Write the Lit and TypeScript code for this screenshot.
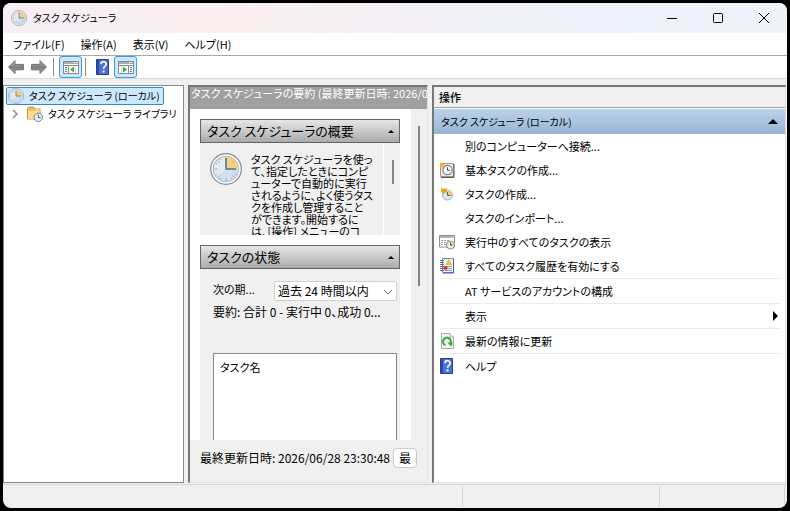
import { LitElement, html, css, svg, nothing } from "lit";
import { customElement } from "lit/decorators.js";

const clockFace = svg`
  <circle cx="16" cy="16" r="15.3" fill="#fdfdfd" stroke="#85898d" stroke-width="1.2"/>
  <circle cx="16" cy="16" r="12.8" fill="#e2ecf5" stroke="#a9adb1" stroke-width="1"/>
  <path d="M7 25 L25 7 A12.6 12.6 0 0 1 7 25Z" fill="#c3d8ea" opacity=".6"/>
  <path d="M16 16V3.6A12.4 12.4 0 0 1 28.4 16Z" fill="#f5d080"/>
  <path d="M16 5V16H26" fill="none" stroke="#53718f" stroke-width="1.6"/>
  <path d="M16 25v3M4.5 16h3M8 8l1.6 1.6M8 24l1.6-1.6M24 24l-1.6-1.6M24 8l-1.6 1.6M10 5.6l.8 1.4M5.6 10l1.4.8M5.6 22l1.4-.8M10 26.4l.8-1.4M22 26.4l-.8-1.4M26.4 22l-1.4-.8" stroke="#8fa6bb" stroke-width=".9"/>`;

const clock = (cls: string) => html`<svg class=${cls} viewBox="0 0 32 32" aria-hidden="true">${clockFace}</svg>`;

const arrow = (flip: boolean) => html`<svg class="i16" viewBox="0 0 16 16" aria-hidden="true">
  <defs><linearGradient id="g" x1="0" y1="0" x2="0" y2="1"><stop offset="0" stop-color="#bdbdbd"/><stop offset=".5" stop-color="#7d7d7d"/><stop offset="1" stop-color="#b0b0b0"/></linearGradient></defs>
  <path transform=${flip ? "matrix(-1 0 0 1 16 0)" : ""} d="M.6 8 7 1.6V5.4H15.4V10.8H7V14.6Z" fill="url(#g)" stroke="#6c6c6c" stroke-width="1" stroke-linejoin="round"/></svg>`;

const paneIcon = (right: boolean) => html`<svg class="i16" viewBox="0 0 16 16" aria-hidden="true">
  <path d="M.5 2.5h15v12H.5z" fill="#fff" stroke="#868b92"/>
  <path d="M1 3h14v2H1z" fill="#a9adb3"/><path d="M11 3.5h1M13 3.5h1" stroke="#fff"/>
  <path d="M1 6.5h14" stroke="#868b92"/>
  ${right
    ? svg`<path d="M10.5 7v7" stroke="#868b92"/><path d="M12 8.5h2M12 10.5h2M12 12.5h2" stroke="#4d78b8"/><path d="M3.5 7v7" stroke="#d5d9df"/><path d="M5 7.500v6l4-3z" fill="#3fae2f"/>`
    : svg`<path d="M5.5 7v7" stroke="#868b92"/><path d="M2 8.5h2M2 10.5h2M2 12.5h2" stroke="#4d78b8"/><path d="M12.5 7v7" stroke="#d5d9df"/><path d="M11 7.500v6l-4-3z" fill="#3fae2f"/>`}
</svg>`;

const helpIcon = html`<svg class="i16" viewBox="0 0 16 16" aria-hidden="true">
  <path d="M1.5.5h12v15h-12z" fill="#4a72d6" stroke="#263f8f"/><path d="M2 1h2v14H2z" fill="#2c4bab"/>
  <path d="M5.900 5.2C5.900 1.800 11.200 2 11.100 5.200 11 7.200 8.500 7.400 8.500 9.800" fill="none" stroke="#fff" stroke-width="1.700"/>
  <path d="M7.600 11.400h1.900v2H7.600z" fill="#fff"/></svg>`;

const folderIcon = html`<svg class="i16" viewBox="0 0 16 16" aria-hidden="true">
  <path d="M.5 2.5 1.5 1h5l1 1.5h5.500V13H.5z" fill="#e9bd55" stroke="#c9983a"/>
  <path d="M1 4.500h12V13H1z" fill="#f8dc8c"/><path d="M8.500 3h4" stroke="#fff"/>
  <circle cx="11.300" cy="11.300" r="4.200" fill="#e8f1f8" stroke="#71828f"/>
  <path d="M11.300 8.500V11.500H13.600" fill="none" stroke="#3c5872"/></svg>`;

const basicTaskIcon = html`<svg class="i16" viewBox="0 0 16 16" aria-hidden="true">
  <path d="M1.500 1.500h13v13h-13z" fill="#eee9e4" stroke="#a0958e"/><path d="M15 2v13.500H2" fill="none" stroke="#5f5550"/>
  <circle cx="8.500" cy="8" r="4.600" fill="#f5f9fc" stroke="#7b858d" stroke-width="1.200"/>
  <path d="M8.500 5.300V8.300H11" fill="none" stroke="#3d5268"/>
  <path d="M2.800 0 3.800 1.800 6 1.200 5.200 3 6.400 4 4.600 4.600 4.200 6.400 2.800 5.200 1.200 6.200 1.300 4.300 0 3.400 1.500 2.700 1 1 2.300 1.600Z" fill="#f9b137"/></svg>`;

const taskIcon = html`<svg class="i16" viewBox="0 0 16 16" aria-hidden="true">
  <circle cx="8.500" cy="9" r="5" fill="#dbe9f2" stroke="#9fabb3"/>
  <path d="M8.500 9V4A5 5 0 0 1 13.500 9Z" fill="#f3cd7c"/>
  <path d="M8.500 6V9.500H11.500" fill="none" stroke="#4b6379"/>
  <path d="M2 2 5 3 7.500 2 7.500 4.500 8.500 6 6 6.500 4.500 8.500 3.500 6.500 2 6Z" fill="#f59a1c"/></svg>`;

const runningIcon = html`<svg class="i16" viewBox="0 0 16 16" aria-hidden="true">
  <path d="M.5 1.500h15v11.500H.5z" fill="#fff" stroke="#8b9097"/><path d="M1 2h14v2H1z" fill="#aeb4bb"/>
  <path d="M12 3h1M14 3h1" stroke="#fff"/>
  <path d="M2 6.500h2M5 6.500h2M8 6.500h2M2 8.500h2M5 8.500h2M2 10.500h2M5 10.500h2" stroke="#98a0a8"/>
  <circle cx="11.500" cy="11" r="4" fill="#eaf2ec" stroke="#7e8b8c"/><path d="M11.500 11V7.300A3.700 3.700 0 0 1 15.200 11Z" fill="#eed08a"/>
  <path d="M11.500 8.500V11.300H13.500" fill="none" stroke="#3f5a70"/></svg>`;

const historyIcon = html`<svg class="i16" viewBox="0 0 16 16" aria-hidden="true">
  <path d="M3.500 .5h11v14h-11z" fill="#f2f6fc" stroke="#6d8cc4"/><path d="M14.500 1v14H4" fill="none" stroke="#3e5f9f"/>
  <path d="M1 2.500h4M1 4.500h4M1 6.500h4M1 8.500h4M1 10.500h4M1 12.500h4" stroke="#6d6d70"/>
  <path d="M6 8.500h7M6 10.500h7M6 12.500h7" stroke="#7fa2d2"/>
  <path d="M9.800 1.500 12.800 6.500H7Z" fill="#f7c928" stroke="#d8a414" stroke-width=".6"/><circle cx="6.500" cy="10" r="2" fill="#d2322d"/></svg>`;

const refreshIcon = html`<svg class="i16" viewBox="0 0 16 16" aria-hidden="true">
  <path d="M2.500.5h8.500l3.500 3.500v11.500h-12z" fill="#f6f7f8" stroke="#a5a9ad"/><path d="M11 .5v3.500h3.500" fill="#fff" stroke="#a5a9ad"/>
  <path d="M6.500 12.200A3.900 3.900 0 1 1 11.600 10" fill="none" stroke="#38ae38" stroke-width="2.100"/>
  <path d="M8.300 9.500h5.400l-1.200 4.200Z" fill="#38ae38"/></svg>`;

interface Action { label: string; icon?: unknown; line?: boolean; sub?: boolean }

const actions: Action[] = [
  { label: "別のコンピューターへ接続..." },
  { label: "基本タスクの作成...", icon: basicTaskIcon },
  { label: "タスクの作成...", icon: taskIcon },
  { label: "タスクのインポート..." },
  { label: "実行中のすべてのタスクの表示", icon: runningIcon },
  { label: "すべてのタスク履歴を有効にする", icon: historyIcon },
  { label: "AT サービスのアカウントの構成", line: true },
  { label: "表示", line: true, sub: true },
  { label: "最新の情報に更新", icon: refreshIcon, line: true },
  { label: "ヘルプ", icon: helpIcon, line: true },
];

const overview = [
  "タスク スケジューラを使っ", "て、指定したときにコンピ", "ューターで自動的に実行", "されるように、よく使うタス",
  "クを作成し管理すること", "ができます。開始するに", "は、[操作] メニューのコ",
];

@customElement("app-root")
export class AppRoot extends LitElement {
  static styles = css`
    :host { display: block; height: 100vh; box-sizing: border-box; padding: 3px; background: #000; color: #000;
      font: 12px/16px "Noto Sans CJK JP", "Noto Sans", sans-serif; font-feature-settings: "palt"; }
    * { box-sizing: border-box; }
    button, select { font: inherit; font-feature-settings: inherit; color: inherit; margin: 0; padding: 0; border: 0; background: none; }
    svg { display: block; flex: none; }
    .i16 { width: 16px; height: 16px; }
    .i32 { width: 32px; height: 32px; }
    .window { height: 100%; display: flex; flex-direction: column; border-radius: 8px; overflow: hidden; background: #f0f0f0; white-space: nowrap; }
    .title { display: flex; align-items: center; height: 30px; flex: none; padding-left: 8px; background: linear-gradient(90deg, #f6eff5, #faeff0 30%, #f1f1f8 60%, #eef2fb 80%, #f0f3fa); font-size: 10px; }
    .title h1 { flex: 1; margin: 0; padding-left: 6px; font: inherit; }
    .caption { width: 46px; height: 30px; display: grid; place-items: center; }
    .menu { display: flex; gap: 16px; flex: none; height: 23px; align-items: center; padding-left: 10px; background: #fff; border-bottom: 1px solid #a8a8a8; font-size: 11px; }
    .tools { display: flex; align-items: center; flex: none; height: 23px; padding-left: 1px; background: #fff; border-bottom: 1px solid #d8d8d8; }
    .tool { width: 23px; height: 22px; display: grid; place-items: center; }
    .tool.on { background: #cce8ff; border: 1px solid #3c9bdc; border-radius: 3px; }
    .bar { width: 1px; height: 18px; margin: 0 5px 0 3px; background: #8a8a8a; }
    .panes { flex: 1; min-height: 0; display: flex; gap: 4px; padding: 6px 1px 1px 0; }
    .tree { flex: 0 0 181px; min-width: 0; border: 1px solid #828790; background: #fff; padding: 1px 2px; font-size: 10px; }
    .node { display: flex; align-items: center; gap: 5px; height: 18px; }
    .node.sel { width: max-content; padding: 0 3px 0 1px; background: #cce8ff; border: 1px solid #2a8dd4; border-radius: 2px; }
    .node.child { padding-left: 6px; }
    .node.child .i16 { margin-left: 3px; }
    .center { flex: 0 0 240px; min-width: 0; display: flex; flex-direction: column; border: solid; border-width: 2px 1px 1px 2px; border-color: #777 #e3e3e3 #e3e3e3 #777; font-size: 11px; }
    .head { flex: none; height: 22px; padding-left: 1px; line-height: 12px; background: #a0a0a0; color: #fff; overflow: hidden; }
    .scroll { flex: 1; min-height: 0; display: flex; }
    .content { flex: 1; min-width: 0; display: flex; flex-direction: column; gap: 10px; padding: 10px 11px 0 10px; background: #fff; overflow: hidden; }
    .track { flex: none; width: 16px; padding: 17px 0 0 7px; }
    .thumb { width: 2px; height: 160px; background: #868686; }
    .card { flex: none; background: #f0f0f0; }
    .card.grow { flex: 1; min-height: 0; display: flex; flex-direction: column; }
    .card h2 { margin: 0; font: inherit; }
    .fold { width: 100%; height: 24px; display: flex; align-items: center; justify-content: space-between; padding: 0 5px 0 6px; border: 1px solid #646464; background: linear-gradient(#e6e6e6, #c9c9c9 50%, #ababab); font-size: 13px; }
    .intro { display: flex; height: 92px; overflow: hidden; padding: 10px 0 0 10px; }
    .intro p { flex: 1; min-width: 0; margin: 0 0 0 9px; line-height: 12px; }
    .intro p span { display: block; }
    .intro .rail { flex: none; width: 17px; margin-top: -10px; padding: 17px 0 0 8px; border-left: 1px solid #fff; }
    .intro .rail i { display: block; width: 2px; height: 24px; background: #868686; }
    .status { flex: 1; min-height: 0; display: flex; flex-direction: column; padding: 12px 3px 0 13px; overflow: hidden; font-size: 12px; }
    .period { display: flex; justify-content: space-between; align-items: flex-start; }
    .period label, .list { font-size: 11px; }
    .pick { position: relative; display: block; width: 123px; }
    .pick select { width: 100%; height: 20px; padding: 0 3px; appearance: none; background: #fff; border: 1px solid #cfcfcf; border-radius: 2px; }
    .pick svg { position: absolute; right: 4px; top: 8px; pointer-events: none; }
    .sum { margin: 3px 0 33px; }
    .list { flex: 1; width: 100%; border: 1px solid #828790; border-bottom: 0; background: #fff; border-spacing: 0; }
    .list th { padding: 5px 6px; text-align: left; vertical-align: top; font-weight: 400; }
    .foot { flex: none; height: 42px; display: flex; align-items: center; justify-content: space-between; padding: 0 10px 7px; font-size: 12px; }
    .foot button { width: 24px; height: 20px; background: #fff; border: 1px solid #ccc; border-radius: 4px; line-height: 16px; }
    .actions { flex: 1; min-width: 0; border: solid; border-width: 2px 1px 1px 2px; border-color: #777 #e3e3e3 #e3e3e3 #777; background: #fff; font-size: 11px; }
    .actions h2 { height: 21px; margin: 0; padding: 2px 5px; background: #f0f0f0; border-bottom: 1px solid #a0a0a0; font: inherit; font-weight: 500; }
    .group { display: flex; align-items: center; justify-content: space-between; width: 100%; height: 26px; padding: 0 7px; border-top: 1px solid #fff; background: linear-gradient(#bcd3ea, #98b4d4); font-size: 10px; }
    .actions ul { list-style: none; margin: 0; padding: 0 5px; }
    .line { border-top: 1px solid #ececec; }
    .act { display: grid; grid-template-columns: 16px 1fr auto; gap: 10px; align-items: center; width: 100%; height: 24px; text-align: left; }
    .act .arrow { margin-right: 2px; }
    .bottom { flex: none; height: 24px; display: grid; grid-template-columns: 458px 197px 1fr; border-top: 1px solid #d4d4d4; padding: 1px 2px; }
    .bottom div { border-right: 1px solid #d4d4d4; }
  `;

  render() {
    return html`
      <div class="window">
        <header class="title">
          ${clock("i16")}
          <h1>タスク スケジューラ</h1>
          <button class="caption" aria-label="最小化"><svg width="12" height="12"><path d="M1 6.5h10" stroke="#000"/></svg></button>
          <button class="caption" aria-label="最大化"><svg width="12" height="12"><rect x="1.500" y="1.500" width="9" height="9" rx="1" fill="none" stroke="#000"/></svg></button>
          <button class="caption" aria-label="閉じる"><svg width="12" height="12"><path d="M1 1l10 10M11 1L1 11" stroke="#000"/></svg></button>
        </header>
        <nav class="menu">
          <button>ファイル(F)</button><button>操作(A)</button><button>表示(V)</button><button>ヘルプ(H)</button>
        </nav>
        <div class="tools" role="toolbar">
          <button class="tool" aria-label="戻る">${arrow(false)}</button>
          <button class="tool" aria-label="進む">${arrow(true)}</button>
          <span class="bar"></span>
          <button class="tool on" aria-label="ツリー">${paneIcon(false)}</button>
          <span class="bar"></span>
          <button class="tool" aria-label="ヘルプ">${helpIcon}</button>
          <button class="tool on" aria-label="操作ウィンドウ">${paneIcon(true)}</button>
        </div>
        <main class="panes">
          <nav class="tree">
            <button class="node sel">${clock("i16")}タスク スケジューラ (ローカル)</button>
            <button class="node child">
              <svg width="7" height="10"><path d="M1 1l4 4-4 4" fill="none" stroke="#8c8c8c" stroke-width="1.500"/></svg>
              ${folderIcon}タスク スケジューラ ライブラリ</button>
          </nav>
          <section class="center">
            <div class="head">タスク スケジューラの要約 (最終更新日時: 2026/06/28 23:30:48)</div>
            <div class="scroll">
              <div class="content">
                <section class="card">
                  <h2><button class="fold">タスク スケジューラの概要${this.up(6)}</button></h2>
                  <div class="intro">
                    ${clock("i32")}
                    <p>${overview.map((t) => html`<span>${t}</span>`)}</p>
                    <div class="rail"><i></i></div>
                  </div>
                </section>
                <section class="card grow">
                  <h2><button class="fold">タスクの状態${this.up(6)}</button></h2>
                  <div class="status">
                    <div class="period">
                      <label for="period">次の期...</label>
                      <span class="pick">
                        <select id="period"><option>過去 24 時間以内</option></select>
                        <svg width="10" height="6"><path d="M1 1l4 4 4-4" fill="none" stroke="#666"/></svg>
                      </span>
                    </div>
                    <div class="sum">要約: 合計 0 - 実行中 0、成功 0...</div>
                    <table class="list"><thead><tr><th scope="col">タスク名</th></tr></thead></table>
                  </div>
                </section>
              </div>
              <div class="track"><div class="thumb"></div></div>
            </div>
            <div class="foot"><span>最終更新日時: 2026/06/28 23:30:48</span><button>最</button></div>
          </section>
          <aside class="actions">
            <h2>操作</h2>
            <button class="group">タスク スケジューラ (ローカル)${this.up(10)}</button>
            <ul>
              ${actions.map((a) => html`<li class=${a.line ? "line" : ""}>
                <button class="act"><span>${a.icon ?? nothing}</span><span>${a.label}</span>
                ${a.sub ? html`<svg class="arrow" width="5" height="10"><path d="M0 0l5 5-5 5z"/></svg>` : nothing}</button>
              </li>`)}
            </ul>
          </aside>
        </main>
        <footer class="bottom"><div></div><div></div><div></div></footer>
      </div>`;
  }

  private up(w: number) {
    return html`<svg width=${w} height=${w / 2} viewBox="0 0 10 5" aria-hidden="true"><path d="M0 5 5 0l5 5z"/></svg>`;
  }
}
